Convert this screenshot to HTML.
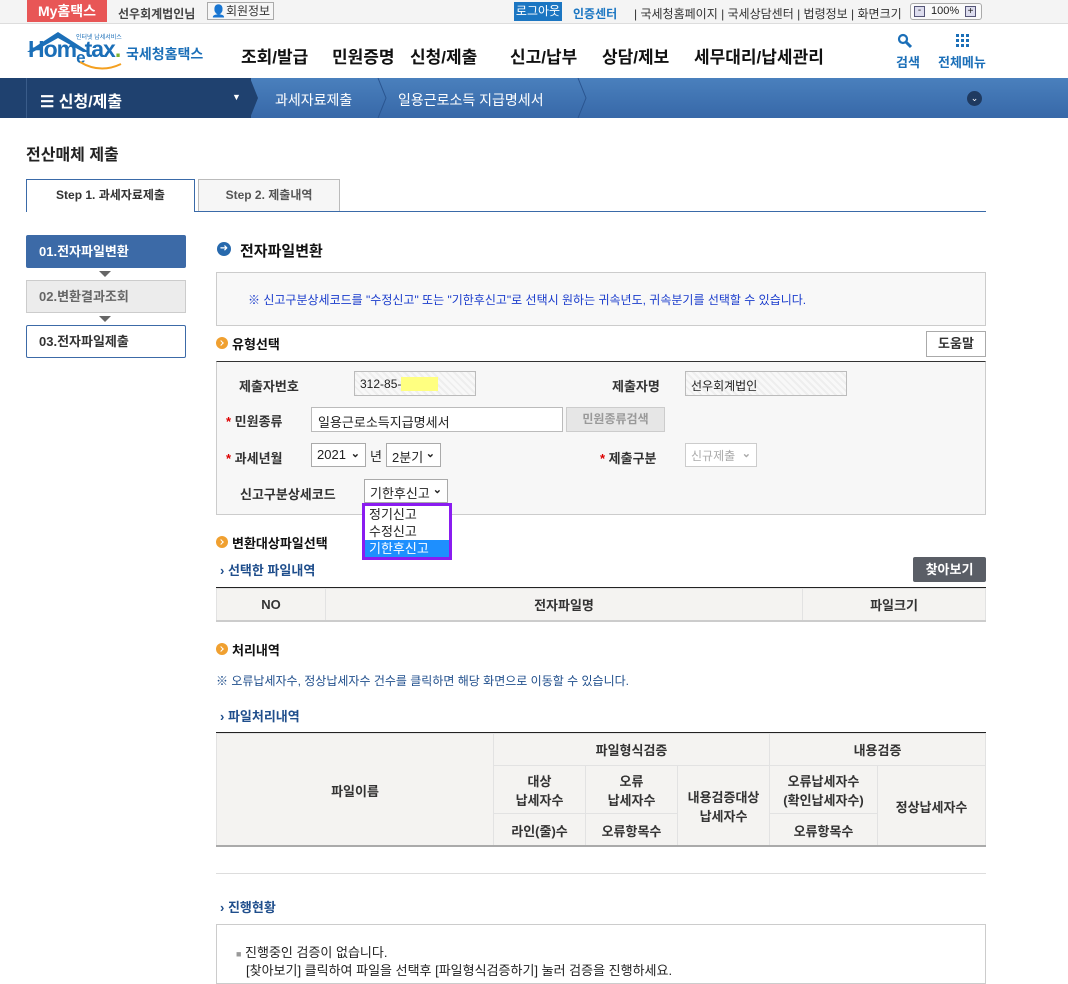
<!DOCTYPE html>
<html><head><meta charset="utf-8"><style>
*{margin:0;padding:0;box-sizing:border-box}
body{width:1068px;height:976px;overflow:hidden;background:#fff;font-family:"Liberation Sans","Noto Sans CJK KR",sans-serif;font-size:12px;color:#222;position:relative}
.a{position:absolute;white-space:nowrap}
.b{font-weight:bold}
.sel{position:absolute;border:1px solid #aaa;background:#fff;font-size:13px;padding:3px 0 0 5px;height:24px}
.sel i{position:absolute;right:5px;top:3px;font-style:normal;font-size:11px;font-weight:bold}
.star{color:#d00;font-weight:bold}
.obul{position:absolute;width:12px;height:12px;border-radius:50%;background:#f0a030}
.obul:after{content:"";position:absolute;left:3px;top:3.5px;width:3px;height:3px;border-right:1.6px solid #fff;border-top:1.6px solid #fff;transform:rotate(45deg)}
.sub{color:#1f4e8c;font-weight:bold;font-size:13px}
table{border-collapse:collapse;position:absolute}
td{border:1px solid #e2e2e2;background:#f4f3f1;text-align:center;font-weight:bold;font-size:13px;color:#333}
.tri{position:absolute;width:0;height:0;border-left:6px solid transparent;border-right:6px solid transparent;border-top:6px solid #666}
</style></head><body>
<!-- top bar -->
<div class="a" style="left:0;top:0;width:1068px;height:24px;background:#f4f4f4;border-bottom:1px solid #ddd"></div>
<div class="a b" style="left:27px;top:0;width:80px;height:22px;background:#e85656;color:#fff;font-size:14px;text-align:center;line-height:22px">My홈택스</div>
<div class="a b" style="left:118px;top:5px;font-size:12px;color:#444">선우회계법인님</div>
<div class="a" style="left:207px;top:2px;width:67px;height:18px;border:1px solid #aaa;background:#f6f6f6;font-size:12px;line-height:16px;padding-left:3px;color:#333">&#x1F464;회원정보</div>
<div class="a" style="left:514px;top:2px;width:48px;height:19px;background:#1b76c2;color:#fff;font-size:12px;line-height:19px;text-align:center">로그아웃</div>
<div class="a b" style="left:573px;top:5px;color:#1b76c2;font-size:12px">인증센터</div>
<div class="a" style="left:634px;top:5px;font-size:12px;color:#333">| 국세청홈페이지 | 국세상담센터 | 법령정보 | 화면크기</div>
<div class="a" style="left:910px;top:3px;width:72px;height:17px;border:1px solid #aaa;border-radius:3px;background:#fafafa;font-size:11px;line-height:15px;padding-left:20px">100%</div>
<div class="a" style="left:914px;top:6px;width:11px;height:11px;border:1px solid #557;background:#dde;font-size:10px;line-height:8px;text-align:center">-</div>
<div class="a" style="left:965px;top:6px;width:11px;height:11px;border:1px solid #557;background:#dde;font-size:10px;line-height:9px;text-align:center">+</div>
<!-- header -->
<svg class="a" style="left:25px;top:30px" width="70" height="40"><path d="M2 22 L33 2 L64 22 L58 22 L33 8 L8 22Z" fill="#1b6fb8"/></svg>
<div class="a b" style="left:28px;top:36px;font-size:23px;color:#1b6fb8;letter-spacing:-1px">Hom<span style="font-size:17px;position:relative;top:6px">e</span>tax<span style="color:#7bb230">.</span></div>
<div class="a" style="left:76px;top:32px;font-size:6px;color:#1b6fb8">인터넷 납세서비스</div>
<svg class="a" style="left:78px;top:60px" width="45" height="14"><path d="M2 2 Q22 14 43 4" stroke="#f4a020" stroke-width="2" fill="none"/></svg>
<div class="a b" style="left:126px;top:44px;font-size:14px;color:#1b6fb8">국세청홈택스</div>
<div class="a b" style="left:241px;top:43px;font-size:17px;color:#111">조회/발급</div>
<div class="a b" style="left:332px;top:43px;font-size:17px;color:#111">민원증명</div>
<div class="a b" style="left:410px;top:43px;font-size:17px;color:#111">신청/제출</div>
<div class="a b" style="left:510px;top:43px;font-size:17px;color:#111">신고/납부</div>
<div class="a b" style="left:602px;top:43px;font-size:17px;color:#111">상담/제보</div>
<div class="a b" style="left:694px;top:43px;font-size:17px;color:#111">세무대리/납세관리</div>
<svg class="a" style="left:897px;top:33px" width="16" height="16"><circle cx="6" cy="6" r="4" stroke="#1b6fb8" stroke-width="2.2" fill="none"/><path d="M9 9 L14 14" stroke="#1b6fb8" stroke-width="3"/></svg>
<div class="a b" style="left:896px;top:52px;font-size:13px;color:#1b6fb8">검색</div>
<svg class="a" style="left:955px;top:33px" width="16" height="16" fill="#1b6fb8"><rect x="1" y="1" width="3" height="3"/><rect x="6" y="1" width="3" height="3"/><rect x="11" y="1" width="3" height="3"/><rect x="1" y="6" width="3" height="3"/><rect x="6" y="6" width="3" height="3"/><rect x="11" y="6" width="3" height="3"/><rect x="1" y="11" width="3" height="3"/><rect x="6" y="11" width="3" height="3"/><rect x="11" y="11" width="3" height="3"/></svg>
<div class="a b" style="left:938px;top:52px;font-size:13px;color:#1b6fb8">전체메뉴</div>
<!-- blue bar -->
<div class="a" style="left:0;top:78px;width:1068px;height:40px;background:linear-gradient(#4a80bd,#3768a8)"></div>
<div class="a" style="left:0;top:78px;width:251px;height:40px;background:#1f416f"></div>
<div class="a" style="left:26px;top:78px;width:1px;height:40px;background:#3a5c8a"></div>
<svg class="a" style="left:250px;top:78px" width="340" height="40"><path d="M0 0 L8 20 L0 40Z" fill="#1f416f"/><path d="M128 0 L136 20 L128 40" stroke="#2a5590" fill="none"/><path d="M328 0 L336 20 L328 40" stroke="#2a5590" fill="none"/></svg>
<div class="a b" style="left:40px;top:88px;font-size:16px;color:#fff">☰ 신청/제출</div>
<div class="a" style="left:232px;top:92px;font-size:9px;color:#fff">▼</div>
<div class="a" style="left:275px;top:90px;font-size:14px;color:#fff">과세자료제출</div>
<div class="a" style="left:398px;top:90px;font-size:14px;color:#fff">일용근로소득 지급명세서</div>
<div class="a" style="left:967px;top:91px;width:15px;height:15px;border-radius:50%;background:#1f3a60;color:#fff;font-size:9px;text-align:center;line-height:15px">⌄</div>
<!-- title & tabs -->
<div class="a b" style="left:26px;top:141px;font-size:16px;color:#222">전산매체 제출</div>
<div class="a" style="left:26px;top:211px;width:960px;height:1px;background:#3a6aa8"></div>
<div class="a b" style="left:26px;top:179px;width:169px;height:33px;background:#fff;border:1px solid #3a6aa8;border-bottom:none;text-align:center;line-height:31px;font-size:12px;color:#333">Step 1. 과세자료제출</div>
<div class="a b" style="left:198px;top:179px;width:142px;height:32px;background:#f6f6f6;border:1px solid #bbb;border-bottom:none;text-align:center;line-height:31px;font-size:12px;color:#555">Step 2. 제출내역</div>
<!-- steps -->
<div class="a b" style="left:26px;top:235px;width:160px;height:33px;background:#3c6aa7;border-radius:2px;color:#fff;font-size:13px;line-height:33px;padding-left:13px">01.전자파일변환</div>
<div class="tri" style="left:99px;top:271px"></div>
<div class="a b" style="left:26px;top:280px;width:160px;height:33px;background:#ececec;border:1px solid #ccc;color:#666;font-size:13px;line-height:31px;padding-left:12px">02.변환결과조회</div>
<div class="tri" style="left:99px;top:316px"></div>
<div class="a b" style="left:26px;top:325px;width:160px;height:33px;background:#fff;border:1px solid #3c6aa7;border-radius:2px;color:#333;font-size:13px;line-height:31px;padding-left:12px">03.전자파일제출</div>
<!-- section -->
<div class="a" style="left:217px;top:242px;width:14px;height:14px;border-radius:50%;background:#2769ad;color:#fff;font-size:10px;line-height:14px;text-align:center">➜</div>
<div class="a b" style="left:240px;top:240px;font-size:15px;color:#111">전자파일변환</div>
<div class="a" style="left:216px;top:272px;width:770px;height:54px;background:#f8f8f8;border:1px solid #ccc"></div>
<div class="a" style="left:248px;top:291px;font-size:12px;color:#1a3ccc">※ 신고구분상세코드를 "수정신고" 또는 "기한후신고"로 선택시 원하는 귀속년도, 귀속분기를 선택할 수 있습니다.</div>
<div class="obul" style="left:216px;top:337px"></div>
<div class="a b" style="left:232px;top:334px;font-size:13px;color:#111">유형선택</div>
<div class="a b" style="left:926px;top:331px;width:60px;height:26px;border:1px solid #aaa;background:#fff;font-size:13px;text-align:center;line-height:24px;color:#333">도움말</div>
<div class="a" style="left:216px;top:361px;width:770px;height:154px;background:#f7f7f7;border:1px solid #ccc;border-top:1px solid #333"></div>
<div class="a b" style="left:239px;top:376px;font-size:13px;color:#333">제출자번호</div>
<div class="a" style="left:354px;top:371px;width:122px;height:25px;border:1px solid #bbb;background:repeating-linear-gradient(45deg,#eee 0 2px,#f8f8f8 2px 5px);font-size:12px;padding:5px 0 0 5px">312-85-<span style="background:#ffff80;color:#ffff80">&nbsp;xxxxx&nbsp;</span></div>
<div class="a b" style="left:612px;top:376px;font-size:13px;color:#333">제출자명</div>
<div class="a" style="left:685px;top:371px;width:162px;height:25px;border:1px solid #bbb;background:repeating-linear-gradient(45deg,#eee 0 2px,#f8f8f8 2px 5px);font-size:12px;padding:5px 0 0 5px">선우회계법인</div>
<div class="a b" style="left:226px;top:411px;font-size:13px;color:#333"><span class="star">*</span> 민원종류</div>
<div class="a" style="left:311px;top:407px;width:252px;height:25px;border:1px solid #bbb;background:#fff;font-size:13px;padding:4px 0 0 6px">일용근로소득지급명세서</div>
<div class="a b" style="left:566px;top:407px;width:99px;height:25px;border:1px solid #ccc;background:#e6e6e6;font-size:12px;color:#999;text-align:center;line-height:23px">민원종류검색</div>
<div class="a b" style="left:226px;top:448px;font-size:13px;color:#333"><span class="star">*</span> 과세년월</div>
<div class="sel" style="left:311px;top:443px;width:55px">2021<i>⌄</i></div>
<div class="a" style="left:370px;top:446px;font-size:13px">년</div>
<div class="sel" style="left:386px;top:443px;width:55px">2분기<i>⌄</i></div>
<div class="a b" style="left:600px;top:448px;font-size:13px;color:#333"><span class="star">*</span> 제출구분</div>
<div class="sel" style="left:685px;top:443px;width:72px;color:#aaa;border-color:#ccc;font-size:12px">신규제출<i>⌄</i></div>
<div class="a b" style="left:240px;top:484px;font-size:13px;color:#333">신고구분상세코드</div>
<div class="sel" style="left:364px;top:479px;width:84px">기한후신고<i>⌄</i></div>
<div class="a" style="left:362px;top:503px;width:90px;height:57px;border:3px solid #8a1cf0;background:#fff;font-size:13px;line-height:17px">
<div style="padding-left:4px">정기신고</div><div style="padding-left:4px">수정신고</div><div style="padding-left:4px;background:#1e8ffe;color:#fff">기한후신고</div></div>
<div class="obul" style="left:216px;top:536px"></div>
<div class="a b" style="left:232px;top:533px;font-size:13px;color:#111">변환대상파일선택</div>
<div class="a sub" style="left:220px;top:560px">› 선택한 파일내역</div>
<div class="a b" style="left:913px;top:557px;width:73px;height:25px;background:#5a5e66;border-radius:2px;color:#fff;font-size:13px;text-align:center;line-height:25px">찾아보기</div>
<div class="a" style="left:216px;top:587px;width:770px;height:1px;background:#222"></div>
<table style="left:216px;top:588px;width:770px"><tr style="height:32px"><td style="width:109px">NO</td><td style="width:477px">전자파일명</td><td>파일크기</td></tr></table>
<div class="a" style="left:216px;top:620px;width:770px;height:2px;background:#ccc"></div>
<div class="obul" style="left:216px;top:643px"></div>
<div class="a b" style="left:232px;top:640px;font-size:13px;color:#111">처리내역</div>
<div class="a" style="left:216px;top:672px;font-size:12px;color:#1f4e8c">※ 오류납세자수, 정상납세자수 건수를 클릭하면 해당 화면으로 이동할 수 있습니다.</div>
<div class="a sub" style="left:220px;top:706px">› 파일처리내역</div>
<div class="a" style="left:216px;top:732px;width:770px;height:1px;background:#222"></div>
<table style="left:216px;top:733px;width:770px">
<tr style="height:32px"><td rowspan="3" style="width:277px">파일이름</td><td colspan="3">파일형식검증</td><td colspan="2">내용검증</td></tr>
<tr style="height:48px"><td style="width:92px;border-top:1px solid #aaa">대상<br>납세자수</td><td style="width:92px;border-top:1px solid #aaa">오류<br>납세자수</td><td rowspan="2" style="width:92px;border-top:1px solid #aaa">내용검증대상<br>납세자수</td><td style="width:108px;border-top:1px solid #aaa">오류납세자수<br>(확인납세자수)</td><td rowspan="2" style="border-top:1px solid #aaa">정상납세자수</td></tr>
<tr style="height:33px"><td style="border-top:1px solid #aaa">라인(줄)수</td><td style="border-top:1px solid #aaa">오류항목수</td><td style="border-top:1px solid #aaa">오류항목수</td></tr>
</table>
<div class="a" style="left:216px;top:845px;width:770px;height:2px;background:#aaa"></div>
<div class="a" style="left:216px;top:873px;width:770px;height:1px;background:#ddd"></div>
<div class="a sub" style="left:220px;top:897px">› 진행현황</div>
<div class="a" style="left:216px;top:924px;width:770px;height:60px;border:1px solid #ccc;background:#fff"></div>
<div class="a" style="left:236px;top:942px;font-size:13px;color:#222"><span style="color:#999;font-size:9px">■</span> 진행중인 검증이 없습니다.</div>
<div class="a" style="left:246px;top:960px;font-size:13px;color:#222">[찾아보기] 클릭하여 파일을 선택후 [파일형식검증하기] 눌러 검증을 진행하세요.</div>
</body></html>
